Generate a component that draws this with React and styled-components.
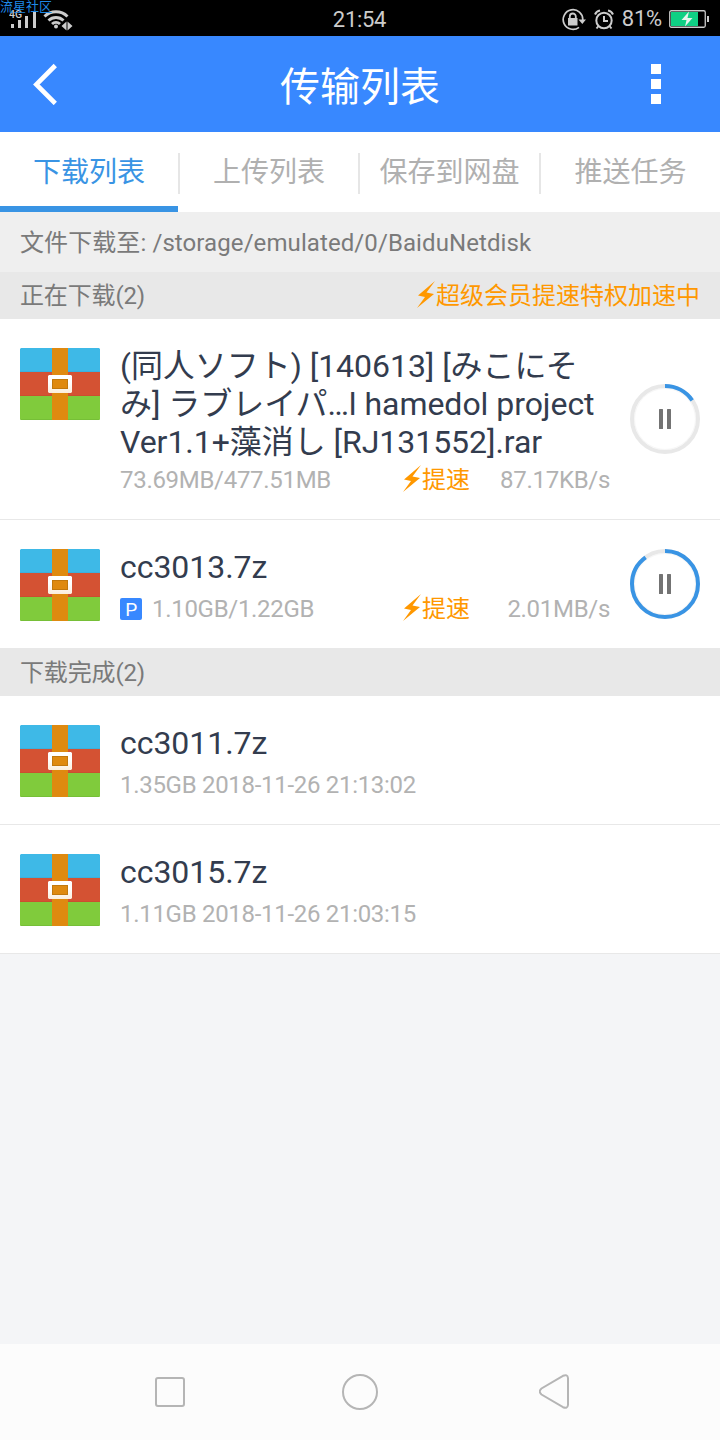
import React from 'react';
import styled, {createGlobalStyle} from 'styled-components';

const GlobalStyle = createGlobalStyle`
    * {
        box-sizing: border-box;
    }

    body {
        margin: 0;
        background-color: #f4f5f7;
        font-family: Roboto, "Noto Sans CJK SC", sans-serif;
    }
`

const Screen = styled.div`
    width: 720px;
    height: 1440px;
    display: flex;
    flex-direction: column;
    overflow: hidden;
    background-color: #f4f5f7;
`

const StatusBar = styled.div`
    height: 36px;
    flex: none;
    display: grid;
    grid-template-columns: 1fr auto 1fr;
    align-items: center;
    position: relative;
    padding: 0 11px 0 9px;
    background-color: black;
    color: #ccc;
    font-size: 22px;
    line-height: 36px;
`

const Clock = styled.span`
    padding: 2px 0 0 1px;
    letter-spacing: -0.3px;
`

const Watermark = styled.span`
    position: absolute;
    top: 0;
    left: 0;
    font-size: 13px;
    line-height: 14px;
    color: #1e88e5;
`

const StatusRight = styled.div`
    display: flex;
    align-items: center;
    justify-content: flex-end;

    span {
        margin: 0 7px 0 8px;
        letter-spacing: -0.2px;
    }

    svg + svg {
        margin-left: 8px;
    }
`

const Header = styled.header`
    height: 96px;
    flex: none;
    display: flex;
    align-items: center;
    justify-content: space-between;
    padding: 0 59px 0 33px;
    background-color: #3888ff;
    color: white;

    h1 {
        margin: 0 0 0 12px;
        padding-top: 8px;
        font-size: 40px;
        line-height: 48px;
        font-weight: 400;
    }
`

const MoreDots = styled.div`
    display: flex;
    flex-direction: column;
    gap: 5px;

    i {
        width: 10px;
        height: 10px;
        background-color: white;
    }
`

const Tabs = styled.nav`
    height: 80px;
    flex: none;
    display: grid;
    grid-template-columns: 178px 2px 178px 2px 179px 2px 179px;
    align-items: center;
    background-color: white;
`

const Tab = styled.div`
    height: 80px;
    padding-top: 8px;
    text-align: center;
    font-size: 28px;
    line-height: 66px;
    color: ${({$active}) => $active ? '#3994e4' : '#b0b0b0'};
    border-bottom: 6px solid ${({$active}) => $active ? '#3994e4' : 'transparent'};
`

const TabDivider = styled.div`
    height: 41px;
    margin-top: 3px;
    background-color: #e6e6e6;
`

const PathBar = styled.div`
    height: 60px;
    flex: none;
    padding: 1px 0 0 20px;
    font-size: 24px;
    line-height: 60px;
    letter-spacing: 0.09px;
    color: #7a7a7a;
    background-color: #efefef;
`

const SectionBar = styled.div`
    height: 47px;
    flex: none;
    display: flex;
    justify-content: space-between;
    padding: 1px 20px 0;
    font-size: 24px;
    line-height: 47px;
    color: #7a7a7a;
    background-color: #e8e8e8;
`

const SectionTitle = styled.span`
    letter-spacing: -0.15px;
`

const Boost = styled.span`
    display: flex;
    align-items: center;
    letter-spacing: 0;
    color: #ff9800;

    svg {
        margin: -4px 1px 0 0;
    }
`

const Row = styled.div`
    flex: none;
    display: flex;
    padding: 29px 20px 25px;
    background-color: white;
    border-bottom: 1px solid #e8e8e8;
`

const RowBody = styled.div`
    flex: 1;
    margin: -1px 20px 0;
`

const FileName = styled.div`
    font-size: 32px;
    line-height: 38px;
    letter-spacing: -0.04px;
    color: #333c4e;
    white-space: pre;
`

const FileMeta = styled.div`
    display: flex;
    align-items: center;
    height: 28px;
    margin-top: ${({$gap}) => $gap}px;
    font-size: 24px;
    line-height: 28px;
    letter-spacing: -0.3px;
    color: #b2b2b2;
`

const Size = styled.span`
    flex: 1;
`

const Speed = styled.span`
    width: 140px;
    text-align: right;
`

const PBadge = styled.span`
    width: 22px;
    height: 22px;
    margin-right: 10px;
    border-radius: 2px;
    background-color: #3888ff;
    color: white;
    font-size: 19px;
    font-weight: 400;
    line-height: 23px;
    text-align: center;
`

const RingWrap = styled.div`
    display: flex;
    align-items: center;
    margin-top: ${({$offset}) => $offset}px;
    height: 70px;
`

const Empty = styled.div`
    flex: 1;
`

const NavBar = styled.footer`
    height: 96px;
    flex: none;
    display: grid;
    grid-template-columns: 187px 198px 32px;
    align-items: center;
    padding-left: 154px;
    background-color: #fcfcfc;
`

const SignalIcon = () => (
    <svg width="64" height="36" viewBox="0 0 64 36" fill="#ccc">
        <text x="0" y="17" fontSize="10.500" fontWeight="500" fontFamily="Roboto">4G</text>
        <path d="M2 23h3v4h-3zM9 19h3v8h-3zM16 15h3v12h-3zM24 10h3v17h-3z"/>
        <g fill="none" stroke="#ccc" strokeWidth="3">
            <path d="M35.500 15.500a16.500 16.500 0 0 1 23 0"/>
            <path d="M39.500 19.500a11 11 0 0 1 15 0"/>
            <path d="M43 23a6 6 0 0 1 8 0"/>
        </g>
        <circle cx="47" cy="25.500" r="2"/>
        <path d="M57.500 20.500v9l-5-4.500zM58.500 20.500l5 4.500-5 4.500z"/>
    </svg>
)

const LockIcon = () => (
    <svg width="24" height="24" viewBox="0 0 24 24">
        <path d="M17 20.300A9.800 9.800 0 1 1 20.800 13" fill="none" stroke="#ccc" strokeWidth="1.700"/>
        <path d="M16.500 12.500h7.500l-3.700 4.500zM6 11h9.500v7.500H6z" fill="#ccc"/>
        <path d="M7.800 11.500v-2a3 3 0 0 1 6 0v2" fill="none" stroke="#ccc" strokeWidth="1.800"/>
    </svg>
)

const AlarmIcon = () => (
    <svg width="20" height="21" viewBox="0 0 20 21" fill="none" stroke="#ccc" strokeWidth="2">
        <circle cx="10" cy="11.500" r="7.700"/>
        <path d="M10 7v5h4M1 5.500Q2.500 2 6 1.500M19 5.500Q17.500 2 14 1.500M4.500 17l-2 2.500M15.500 17l2 2.500"/>
    </svg>
)

const BatteryIcon = () => (
    <svg width="40" height="18" viewBox="0 0 40 18">
        <rect x=".75" y=".75" width="35.500" height="16.500" rx="1.500" fill="none" stroke="#ccc" strokeWidth="1.300"/>
        <rect x="2" y="2" width="27" height="14" fill="#0fd084"/>
        <path d="M38 6h2v6h-2z" fill="#ccc"/>
        <path d="M20 1.500L12.500 10h5l-1.500 6.500L23.500 8h-5z" fill="#e6f5ee"/>
    </svg>
)

const BackIcon = () => (
    <svg width="24" height="42" viewBox="0 0 24 42">
        <path d="M22.300 2.500L3.300 21.500L22.300 40.500" fill="none" stroke="white" strokeWidth="4.600"/>
    </svg>
)

const BoltIcon = () => (
    <svg width="18" height="27" viewBox="0 0 18 27" fill="#ff9800">
        <path d="M18 0L1 14.500L8 16L0 27L17 13L9.500 11.500z"/>
    </svg>
)

const ArchiveIcon = () => (
    <svg width="80" height="72" viewBox="0 0 80 72">
        <defs>
            <linearGradient id="buckle" x1="0" y1="0" x2="0" y2="1">
                <stop offset="0.4" stopColor="#fff"/>
                <stop offset="1" stopColor="#fbeedd"/>
            </linearGradient>
        </defs>
        <path d="M1 0h78l1 1v23H0V1z" fill="#3eb9e7"/>
        <path d="M0 24h80v24H0z" fill="#d45233"/>
        <path d="M0 48h80v23l-1 1H1l-1-1z" fill="#80cb3c"/>
        <path d="M0 23h80v1H0z" fill="#3cb0dc"/>
        <path d="M0 47h80v1H0z" fill="#cb4e30"/>
        <path d="M0 71h80l-1 1H1z" fill="#76bf37"/>
        <path d="M32 0h16v72H32z" fill="#df8a10"/>
        <path d="M51 27l1 1v16l-1 1H29l-1-1V28l1-1z" fill="url(#buckle)"/>
        <path d="M32 31h16v10H32z" fill="#c2780d"/>
        <path d="M33 32h14v8H33z" fill="#df8a10"/>
    </svg>
)

const Ring = ({percent}) => (
    <svg width="70" height="70" viewBox="0 0 70 70" fill="none">
        <circle cx="35" cy="35" r="30.500" stroke="#f7f7f7"/>
        <circle cx="35" cy="35" r="33" stroke="#e8e8e8" strokeWidth="4"/>
        <circle
            cx="35" cy="35" r="33"
            stroke="#3994e4"
            strokeWidth="4"
            pathLength="100"
            strokeDasharray={`${percent} 100`}
            transform="rotate(-90 35 35)"
        />
        <rect x="29" y="25" width="4" height="20" rx=".5" fill="#737373"/>
        <rect x="37" y="25" width="4" height="20" rx=".5" fill="#737373"/>
    </svg>
)

const downloading = [
    {
        name: '(同人ソフト) [140613] [みこにそ\nみ] ラブレイパ…l hamedol project\nVer1.1+藻消し [RJ131552].rar',
        size: '73.69MB/477.51MB',
        speed: '87.17KB/s',
        percent: 15.4,
        offset: 36,
        gap: 5,
    },
    {
        name: 'cc3013.7z',
        size: '1.10GB/1.22GB',
        speed: '2.01MB/s',
        percent: 90,
        offset: 0,
        gap: 9,
        badge: true,
    },
]

const finished = [
    {name: 'cc3011.7z', info: '1.35GB 2018-11-26 21:13:02'},
    {name: 'cc3015.7z', info: '1.11GB 2018-11-26 21:03:15'},
]

const App = () => {
    return (
        <>
            <GlobalStyle/>
            <Screen>
                <StatusBar>
                    <SignalIcon/>
                    <Clock>21:54</Clock>
                    <StatusRight>
                        <LockIcon/>
                        <AlarmIcon/>
                        <span>81%</span>
                        <BatteryIcon/>
                    </StatusRight>
                    <Watermark>流星社区</Watermark>
                </StatusBar>
                <Header>
                    <BackIcon/>
                    <h1>传输列表</h1>
                    <MoreDots><i/><i/><i/></MoreDots>
                </Header>
                <Tabs>
                    <Tab $active>下载列表</Tab>
                    <TabDivider/>
                    <Tab>上传列表</Tab>
                    <TabDivider/>
                    <Tab>保存到网盘</Tab>
                    <TabDivider/>
                    <Tab>推送任务</Tab>
                </Tabs>
                <PathBar>文件下载至: /storage/emulated/0/BaiduNetdisk</PathBar>
                <SectionBar>
                    <SectionTitle>正在下载(2)</SectionTitle>
                    <Boost><BoltIcon/>超级会员提速特权加速中</Boost>
                </SectionBar>
                {downloading.map(file => (
                    <Row key={file.name}>
                        <ArchiveIcon/>
                        <RowBody>
                            <FileName>{file.name}</FileName>
                            <FileMeta $gap={file.gap}>
                                {file.badge && <PBadge>P</PBadge>}
                                <Size>{file.size}</Size>
                                <Boost><BoltIcon/>提速</Boost>
                                <Speed>{file.speed}</Speed>
                            </FileMeta>
                        </RowBody>
                        <RingWrap $offset={file.offset}><Ring percent={file.percent}/></RingWrap>
                    </Row>
                ))}
                <SectionBar>
                    <SectionTitle>下载完成(2)</SectionTitle>
                </SectionBar>
                {finished.map(file => (
                    <Row key={file.name}>
                        <ArchiveIcon/>
                        <RowBody>
                            <FileName>{file.name}</FileName>
                            <FileMeta $gap={9}>{file.info}</FileMeta>
                        </RowBody>
                    </Row>
                ))}
                <Empty/>
                <NavBar>
                    <svg width="32" height="32" viewBox="0 0 32 32" fill="none" stroke="#b5b5b5" strokeWidth="2">
                        <rect x="2" y="2" width="28" height="28" rx="2"/>
                    </svg>
                    <svg width="38" height="38" viewBox="0 0 38 38" fill="none" stroke="#b5b5b5" strokeWidth="2">
                        <circle cx="19" cy="19" r="17"/>
                    </svg>
                    <svg width="32" height="36" viewBox="0 0 32 36" fill="none" stroke="#b5b5b5" strokeWidth="2">
                        <path d="M24 1.800L2.500 14.500Q-1 17.500 2.500 20.500L24 33.200Q28.500 35 29 31V4Q28.500 0 24 1.800z"/>
                    </svg>
                </NavBar>
            </Screen>
        </>
    );
}

export default App;
